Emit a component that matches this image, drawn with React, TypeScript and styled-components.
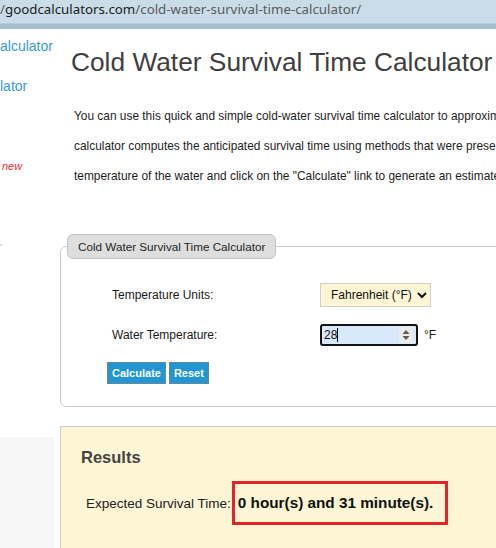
import React from "react";
import styled, { createGlobalStyle } from "styled-components";

const GlobalStyle = createGlobalStyle`
  html, body {
    margin: 0;
    padding: 0;
    background: #ffffff;
    overflow: hidden;
  }
  body {
    font-family: "Liberation Sans", Arial, sans-serif;
  }
  * { box-sizing: border-box; }
`;

const Root = styled.div`
  width: 496px;
  height: 548px;
  overflow: hidden;
  display: flex;
  flex-direction: column;
`;

const AddressBar = styled.div`
  flex: 0 0 auto;
  height: 29px;
  background: #c9dce8;
  border-bottom: 5px solid #a4bfcf;
  box-shadow: inset 0 -1px 0 #b7cddb;
  display: flex;
  align-items: flex-start;
  white-space: nowrap;
  font-family: "Noto Sans", "Open Sans", sans-serif;
  font-size: 13.3px;
  line-height: 19px;
`;

const UrlPart = styled.span<{ $strong?: boolean }>`
  color: ${(p) => (p.$strong ? "#1b1b1b" : "#5a5a5a")};
`;

const Layout = styled.div`
  flex: 1 1 auto;
  display: grid;
  grid-template-columns: 60px 720px;
  min-height: 0;
`;

const Sidebar = styled.div`
  display: flex;
  flex-direction: column;
  align-items: flex-start;
`;

const SideLink = styled.a<{ $gap: number }>`
  display: block;
  margin-top: ${(p) => p.$gap}px;
  font-size: 14px;
  line-height: 18px;
  color: #3a9ad9;
  text-decoration: none;
  white-space: nowrap;
`;

const NewTag = styled.span`
  display: block;
  margin: 65px 0 0 2px;
  font-size: 11px;
  line-height: 13px;
  font-style: italic;
  color: #ef2b36;
`;

const SideDot = styled.span`
  display: block;
  margin-top: 71px;
  width: 2px;
  height: 2px;
  background: #d8d8d8;
`;

const SidePanel = styled.div`
  margin-top: 191px;
  width: 55px;
  flex: 1 1 auto;
  align-self: stretch;
  max-width: 55px;
  background: #f7f7f7;
`;

const Main = styled.main`
  display: flex;
  flex-direction: column;
  align-items: stretch;
`;

const Title = styled.h1`
  margin: 18px 0 0 11px;
  font-size: 26.3px;
  line-height: 30px;
  font-weight: normal;
  color: #404040;
  white-space: nowrap;
`;

const Intro = styled.p`
  margin: 24px 0 0 14px;
  font-size: 11.9px;
  line-height: 30px;
  color: #1e1e1e;
  white-space: nowrap;
`;

const Fieldset = styled.fieldset`
  margin: 43px 0 0 0;
  padding: 0 6px 22px 6px;
  border: 1px solid #cccccc;
  border-radius: 6px;
  min-width: 0;
`;

const Legend = styled.legend`
  padding: 3px 10px;
  font-size: 11.7px;
  line-height: 17px;
  color: #1f1f1f;
  background: #dedede;
  border: 1px solid #c3c3c3;
  border-radius: 6px;
  white-space: nowrap;
`;

const FormGrid = styled.div`
  margin: 24px 0 0 45px;
  display: grid;
  grid-template-columns: 208px auto;
  grid-template-rows: 24px 22px;
  row-gap: 17px;
  align-items: center;
  justify-items: start;
`;

const Label = styled.label`
  font-size: 12px;
  color: #1a1a1a;
  white-space: nowrap;
`;

const Select = styled.select`
  width: 111px;
  height: 24px;
  padding: 0 0 0 6px;
  font-family: "Liberation Sans", Arial, sans-serif;
  font-size: 12px;
  color: #111;
  background: #fdf5d3;
  border: 1px solid #cfcfcf;
  border-radius: 0;
  outline: none;
`;

const ControlRow = styled.div`
  display: flex;
  align-items: center;
  gap: 6px;
`;

const InputBox = styled.div`
  width: 98px;
  height: 22px;
  display: flex;
  align-items: center;
  padding: 0 3px 0 2px;
  border: 2px solid #141414;
  border-radius: 3px;
  background: #d9e8fb;
`;

const NumberInput = styled.input`
  width: 13px;
  padding: 0;
  margin: 0;
  border: none;
  outline: none;
  background: transparent;
  font-family: "Liberation Sans", Arial, sans-serif;
  font-size: 12px;
  color: #111;
`;

const Caret = styled.span`
  width: 1px;
  height: 14px;
  background: #000;
`;

const Spinner = styled.span`
  margin-left: auto;
  width: 14px;
  height: 16px;
  background: #ececec;
  display: flex;
  align-items: center;
  justify-content: center;
`;

const Unit = styled.span`
  font-size: 12px;
  color: #1a1a1a;
`;

const ButtonRow = styled.div`
  margin: 16px 0 0 40px;
  display: flex;
  gap: 3px;
`;

const Button = styled.button`
  height: 22px;
  padding: 0 4px;
  font-family: "Liberation Sans", Arial, sans-serif;
  font-size: 11px;
  font-weight: bold;
  color: #ffffff;
  background: #2196d3;
  border: 1px solid #6a8798;
  border-radius: 0;
  cursor: pointer;
`;

const Results = styled.section`
  margin-top: 19px;
  flex: 1 1 auto;
  min-height: 140px;
  padding: 20px 20px;
  background: #fdf5d3;
  border-top: 1px solid #cccccc;
  border-left: 1px solid #cccccc;
`;

const ResultsTitle = styled.h3`
  margin: 0;
  font-size: 16.5px;
  line-height: 20px;
  font-weight: bold;
  color: #444444;
`;

const ResultLine = styled.div`
  margin: 14px 0 0 5px;
  display: flex;
  align-items: baseline;
  white-space: nowrap;
`;

const ResultLabel = styled.span`
  font-size: 13.5px;
  color: #222;
`;

const ResultValue = styled.span`
  margin-left: 1px;
  padding: 10px 12px 10px 3px;
  line-height: 18px;
  font-size: 15.3px;
  font-weight: bold;
  color: #111;
  border: 3px solid #e5222a;
`;

export default function App() {
  return (
    <Root>
      <GlobalStyle />
      <AddressBar>
        <UrlPart>/</UrlPart>
        <UrlPart $strong>goodcalculators.com</UrlPart>
        <UrlPart>/cold-water-survival-time-calculator/</UrlPart>
      </AddressBar>
      <Layout>
        <Sidebar>
          <SideLink $gap={8} href="#">alculator</SideLink>
          <SideLink $gap={22} href="#">lator</SideLink>
          <NewTag>new</NewTag>
          <SideDot />
          <SidePanel />
        </Sidebar>
        <Main>
          <Title>Cold Water Survival Time Calculator</Title>
          <Intro>
            You can use this quick and simple cold-water survival time calculator to approximate how long a person may survive in cold water. This
            <br />
            calculator computes the anticipated survival time using methods that were presented in scientific research studies. Simply select the
            <br />
            temperature of the water and click on the "Calculate" link to generate an estimate.
          </Intro>
          <Fieldset>
            <Legend>Cold Water Survival Time Calculator</Legend>
            <FormGrid>
              <Label htmlFor="units">Temperature Units:</Label>
              <Select id="units" defaultValue="F">
                <option value="F">Fahrenheit (°F)</option>
                <option value="C">Celsius (°C)</option>
              </Select>
              <Label htmlFor="temp">Water Temperature:</Label>
              <ControlRow>
                <InputBox>
                  <NumberInput id="temp" defaultValue="28" />
                  <Caret />
                  <Spinner>
                    <svg width="8" height="12" viewBox="0 0 8 12">
                      <path d="M4 1 L7.5 5 L0.5 5 Z" fill="#5a5a5a" />
                      <path d="M4 11 L7.5 7 L0.5 7 Z" fill="#5a5a5a" />
                    </svg>
                  </Spinner>
                </InputBox>
                <Unit>°F</Unit>
              </ControlRow>
            </FormGrid>
            <ButtonRow>
              <Button type="button">Calculate</Button>
              <Button type="button">Reset</Button>
            </ButtonRow>
          </Fieldset>
          <Results>
            <ResultsTitle>Results</ResultsTitle>
            <ResultLine>
              <ResultLabel>Expected Survival Time:</ResultLabel>
              <ResultValue>0 hour(s) and 31 minute(s).</ResultValue>
            </ResultLine>
          </Results>
        </Main>
      </Layout>
    </Root>
  );
}
